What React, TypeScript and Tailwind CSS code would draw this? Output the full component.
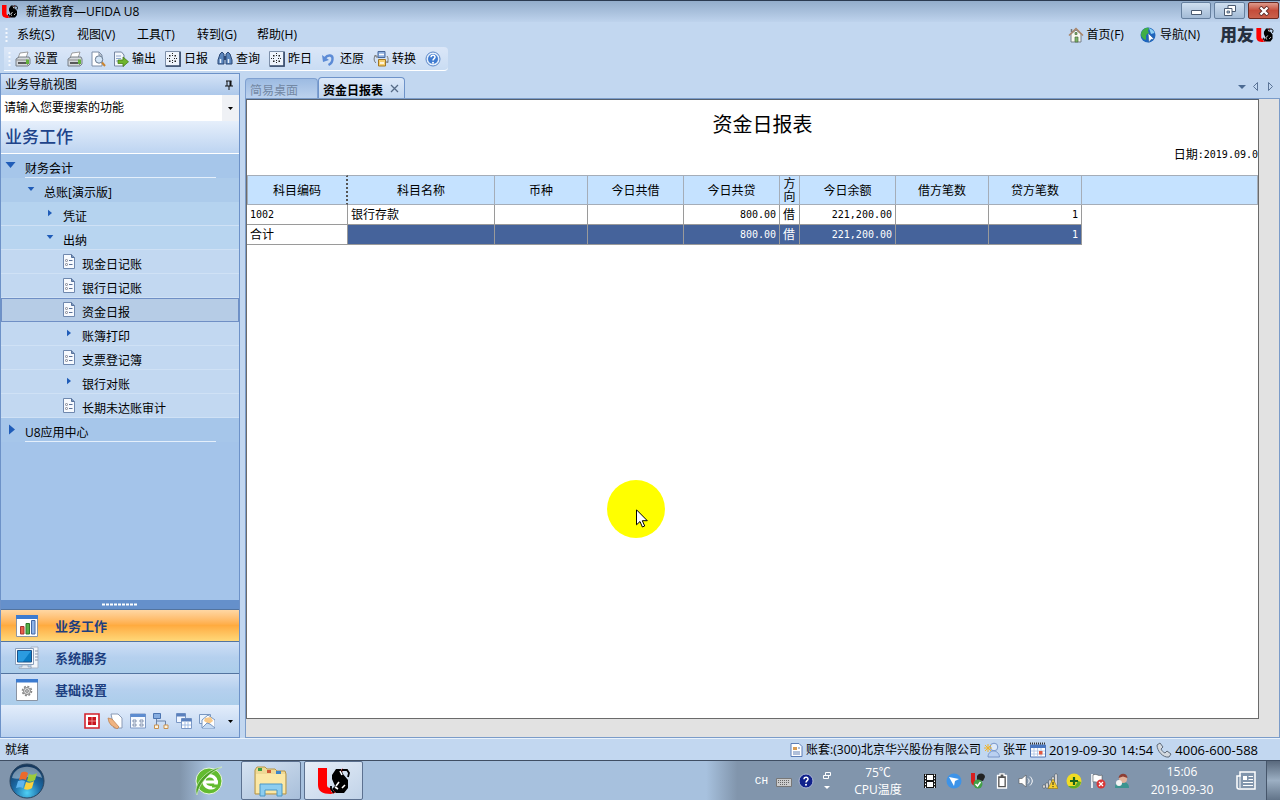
import React from 'react';

type IconProps = { className?: string };

const U8Logo: React.FC<IconProps> = ({ className }) => (
  <svg viewBox="0 0 32 26" className={className} aria-hidden="true">
    <path d="M0 0h9v17c0 2 1 3 4 3v6C4 26 0 23 0 17z" fill="#f00" />
    <path d="M13 25c6-1 8-5 9-10M20 8l5-7" fill="none" stroke="#e11" strokeWidth="2" />
    <path d="M14 7l4-6h5l2 5 5 6v8l-4 5h-8l-4-4 3-3-3-7z" fill="#000" />
    <path d="M24 2h5l2 3-1 4" fill="none" stroke="#000" strokeWidth="1.800" />
    <path d="M22 3l2 4M17 19l3 2M21 14l-3 4M24 20l3-3" stroke="#fff" strokeWidth="1.600" />
    <path d="M13 18v3l3 4" fill="none" stroke="#000" strokeWidth="1.800" />
  </svg>
);

const PrinterIcon = () => (
  <svg viewBox="0 0 16 16" className="size-4" aria-hidden="true">
    <path d="M5 2l8-1-2 6H3z" fill="#fff" stroke="#888" strokeWidth=".8" />
    <path d="M1 8l3-2h10l1 2v5l-2 2H1z" fill="#d4d8dc" stroke="#6b747e" strokeWidth=".9" />
    <path d="M1.500 9h11v5" fill="none" stroke="#888" />
    <path d="M3 12h8" stroke="#222" strokeWidth="1.4" />
    <path d="M11 8.500h3V13h-3z" fill="#63b23c" />
  </svg>
);

const PreviewIcon = () => (
  <svg viewBox="0 0 16 16" className="size-4" aria-hidden="true">
    <path d="M2 1h7l3 3v11H2z" fill="#fff" stroke="#7d8ea6" />
    <path d="M9 1v3h3" fill="none" stroke="#7d8ea6" />
    <circle cx="9" cy="8.500" r="3.700" fill="#d5e7f8" stroke="#66788e" />
    <path d="M12 11.500l3 3.500" stroke="#c98430" strokeWidth="2" />
  </svg>
);

const ExportIcon = () => (
  <svg viewBox="0 0 16 16" className="size-4" aria-hidden="true">
    <path d="M1.500 1h7l2.500 3v11H1.500z" fill="#f3f7fc" stroke="#7686a0" />
    <path d="M3 5h5M3 7.500h5M3 10h4" stroke="#8fa7cc" />
    <path d="M5 9h5V6l5.500 4.800L10 15.500v-3H5z" fill="#6fb52c" stroke="#477f18" strokeWidth=".8" />
  </svg>
);

const GridIcon = () => (
  <svg viewBox="0 0 16 16" className="size-4" aria-hidden="true">
    <path d="M.5.500h15v15H.5z" fill="#eef4fc" stroke="#7d8fa9" />
    <path d="M7.500 2v4M7.500 9v4M2 7.500h4M9 7.500h4" stroke="#222" strokeDasharray="1 1" />
    <path d="M4 4h1.500v1.500H4zM9.500 4H11v1.500H9.500zM4 9.500h1.500V11H4zM9.500 9.500H11V11H9.500z" fill="#222" />
    <path d="M15 1v14H1" fill="none" stroke="#35496a" strokeWidth="1.600" />
  </svg>
);

const BinocularsIcon = () => (
  <svg viewBox="0 0 16 16" className="size-4" aria-hidden="true">
    <path d="M3 3l2-2 2 2v10H1V9z" fill="#5b86bd" stroke="#2c4875" />
    <path d="M9 3l2-2 2 2 2 6v4H9z" fill="#5b86bd" stroke="#2c4875" />
    <path d="M7 5h2v4H7z" fill="#2c4875" />
    <path d="M3.500 8v4M11.500 8v4" stroke="#e6f0fb" strokeWidth="1.500" />
  </svg>
);

const UndoIcon = () => (
  <svg viewBox="0 0 16 16" className="size-4" aria-hidden="true">
    <path d="M4 7c3-4 8-3 7.500 1 0 3-2 5-4 6" fill="none" stroke="#5c8bd6" strokeWidth="2.400" />
    <path d="M1 4l1 7 6-2z" fill="#5c8bd6" />
  </svg>
);

const ConvertIcon = () => (
  <svg viewBox="0 0 16 16" className="size-4" aria-hidden="true">
    <path d="M5 .5h7v6H5z" fill="#8fb0e0" stroke="#49699c" />
    <path d="M6 3.500h5" stroke="#fff" strokeWidth="1.500" />
    <path d="M5.500 8.500h7V15h-7z" fill="#f6cf6d" stroke="#a17622" />
    <path d="M7 12h4" stroke="#fff" strokeWidth="1.500" />
    <path d="M3 4C.5 6 .5 10 3 12M14 5c1.500 2 1.500 5 0 7M1 5h3v2M15.500 11h-3" fill="none" stroke="#777" />
  </svg>
);

const HelpIcon = ({ dark = false }: { dark?: boolean }) => (
  <svg viewBox="0 0 16 16" className="size-4" aria-hidden="true">
    <circle cx="8" cy="8" r="7" fill={dark ? '#10218c' : '#e3eefb'} stroke={dark ? '#aeb9d4' : '#5d88c8'} />
    {!dark && <circle cx="8" cy="8" r="5" fill="#3f7bd0" />}
    <path d="M6 6.300c0-3 4.300-2.600 4 0-.2 1.300-2 1.500-2 3.200" fill="none" stroke="#fff" strokeWidth="1.500" />
    <circle cx="8" cy="11.700" r="1" fill="#fff" />
  </svg>
);

const HomeIcon = () => (
  <svg viewBox="0 0 16 16" className="size-4" aria-hidden="true">
    <path d="M3 7v8h10V7L8 3z" fill="#f8f8f0" stroke="#77808a" />
    <path d="M1 8.500L8 1.500l7 7" fill="none" stroke="#a98468" strokeWidth="1.500" />
    <path d="M3.500 2v3" stroke="#777" strokeWidth="1.500" />
    <path d="M7 5.500h2v2H7zM7 10h3v5H7z" fill="#7bb567" stroke="#4d6b44" strokeWidth=".7" />
  </svg>
);

const GlobeIcon = () => (
  <svg viewBox="0 0 16 16" className="size-4" aria-hidden="true">
    <circle cx="8" cy="8" r="7.500" fill="#1f66bd" />
    <path d="M2 4c2-3 5-4 7-3l-1 3 1 2-3 2v5C2 12-.5 8 2 4z" fill="#3fae46" />
    <path d="M9 1c3 1 5 3 5.500 5L11 7z" fill="#8ed0f4" />
    <path d="M8 6l6 6-3 .5-2 3z" fill="#fff" stroke="#2b5f9e" strokeWidth=".6" />
  </svg>
);

const DocIcon = () => (
  <svg viewBox="0 0 12 15" className="h-[15px] w-3" aria-hidden="true">
    <path d="M.5.500h8l3 3v11H.5z" fill="#f7fafe" stroke="#6f88ae" />
    <path d="M8.500.500v3h3" fill="#7d97bd" stroke="#56719b" />
    <path d="M2.500 6.500h2M2.500 10.500h2" stroke="#445" strokeWidth="2" />
    <path d="M3 6.500h1M3 10.500h1" stroke="#fff" />
    <path d="M6 6.500h3.500M6 10.500h3.500" stroke="#5c7299" />
  </svg>
);

const ArrowDown = ({ className }: IconProps) => (
  <svg viewBox="0 0 10 6" className={className} aria-hidden="true">
    <path d="M0 0h10L5 6z" fill="#1f5cb8" />
  </svg>
);

const ArrowRight = ({ className }: IconProps) => (
  <svg viewBox="0 0 6 10" className={className} aria-hidden="true">
    <path d="M0 0l6 5-6 5z" fill="#1f5cb8" />
  </svg>
);

const Caret = () => (
  <svg viewBox="0 0 5 3" className="h-[3px] w-[5px]" aria-hidden="true">
    <path d="M0 0h5L2.500 3z" fill="#000" />
  </svg>
);

const Grip = () => (
  <svg viewBox="0 0 3 14" className="h-3.5 w-[3px]" aria-hidden="true">
    <path d="M1.500 0v14" stroke="#f4f8fd" strokeWidth="2" strokeDasharray="2 2" />
  </svg>
);

const menus = ['系统(S)', '视图(V)', '工具(T)', '转到(G)', '帮助(H)'];

const tools: { icon: React.ReactNode; label?: string; name: string }[] = [
  { icon: <PrinterIcon />, label: '设置', name: '设置' },
  { icon: <PrinterIcon />, name: '打印' },
  { icon: <PreviewIcon />, name: '预览' },
  { icon: <ExportIcon />, label: '输出', name: '输出' },
  { icon: <GridIcon />, label: '日报', name: '日报' },
  { icon: <BinocularsIcon />, label: '查询', name: '查询' },
  { icon: <GridIcon />, label: '昨日', name: '昨日' },
  { icon: <UndoIcon />, label: '还原', name: '还原' },
  { icon: <ConvertIcon />, label: '转换', name: '转换' },
  { icon: <HelpIcon />, name: '帮助' }
];

interface TreeItem {
  label: string;
  level: 1 | 2 | 3 | 4;
  kind: 'open' | 'closed' | 'doc';
  bg: string;
  selected?: boolean;
}

const tree: TreeItem[] = [
  { label: '财务会计', level: 1, kind: 'open', bg: 'bg-[#a6c6ea]' },
  { label: '总账[演示版]', level: 2, kind: 'open', bg: 'bg-[#accbeb]' },
  { label: '凭证', level: 3, kind: 'closed', bg: 'bg-[#b5d3ef]' },
  { label: '出纳', level: 3, kind: 'open', bg: 'bg-[#b8d5f0]' },
  { label: '现金日记账', level: 4, kind: 'doc', bg: 'bg-[#c2d8f1]' },
  { label: '银行日记账', level: 4, kind: 'doc', bg: 'bg-[#c2d8f1]' },
  { label: '资金日报', level: 4, kind: 'doc', bg: 'bg-[#b6cce6]', selected: true },
  { label: '账簿打印', level: 4, kind: 'closed', bg: 'bg-[#c2d8f1]' },
  { label: '支票登记簿', level: 4, kind: 'doc', bg: 'bg-[#c2d8f1]' },
  { label: '银行对账', level: 4, kind: 'closed', bg: 'bg-[#c2d8f1]' },
  { label: '长期未达账审计', level: 4, kind: 'doc', bg: 'bg-[#c2d8f1]' },
  { label: 'U8应用中心', level: 1, kind: 'closed', bg: 'bg-[#a6c6ea]' }
];

const indent = { 1: 'pl-1', 2: 'pl-[23px]', 3: 'pl-[42px]', 4: 'pl-[61px]' };

const TreeRow: React.FC<{ item: TreeItem }> = ({ item }) => {
  const big = item.level === 1;
  return (
    <li>
      <button
        type="button"
        className={`flex h-6 w-full text-left ${indent[item.level]} ${item.bg} ${
          item.selected ? 'outline outline-1 -outline-offset-1 outline-[#6f8fc5]' : ''
        } ${item.level > 2 && !item.selected ? 'border-b border-[#cfe1f5]' : ''}`}
      >
        <span className="flex h-[22px] w-5 shrink-0 items-center">
          {item.kind === 'doc' && <span className="pl-px"><DocIcon /></span>}
          {item.kind === 'open' && <ArrowDown className={big ? 'h-1.5 w-[11px]' : 'ml-[3px] h-1 w-2'} />}
          {item.kind === 'closed' && <ArrowRight className={big ? 'ml-1 h-[11px] w-1.5' : 'ml-[5px] h-2 w-1'} />}
        </span>
        <span className={`h-6 pt-1.5 leading-[18px] ${big ? 'mr-[23px] flex-1 border-b border-[#e4effb]' : ''}`}>
          {item.label}
        </span>
      </button>
    </li>
  );
};

const ChartIcon = () => (
  <svg viewBox="0 0 24 24" className="size-6" aria-hidden="true">
    <path d="M1.500 1.500h21v21h-21z" fill="#fff" stroke="#8a94a3" />
    <path d="M1 1h22v4H1z" fill="#3c7bd0" />
    <path d="M5.500 12.500h3.500V20H5.500z" fill="#e8604a" stroke="#a33" />
    <path d="M11 9.500h3.500V20H11z" fill="#55b04a" stroke="#2d7828" />
    <path d="M16.500 6.500H20V20h-3.500z" fill="#8fb4e8" stroke="#4468a5" />
  </svg>
);

const ComputerIcon = () => (
  <svg viewBox="0 0 24 24" className="size-6" aria-hidden="true">
    <path d="M16 1h7v21h-7z" fill="#f1f5fa" stroke="#a7b4c7" />
    <path d="M20 5h3M20 8h3M20 11h3M20 14h3" stroke="#8795ab" />
    <path d="M.5 2.500h18v16H.5z" fill="#f7fafd" stroke="#8ba0bc" />
    <path d="M2.500 4.500h14v11.500h-14z" fill="#0a7cc4" stroke="#1c4f86" />
    <path d="M3 5h13L8 15.500H3z" fill="#2b9be0" />
    <path d="M7 19h6v2h3v1.500H4V21h3z" fill="#dfe7f0" stroke="#93a3b8" strokeWidth=".7" />
  </svg>
);

const GearIcon = () => (
  <svg viewBox="0 0 24 24" className="size-6" aria-hidden="true">
    <path d="M1.500 1.500h21v21h-21z" fill="#fff" stroke="#8a94a3" />
    <path d="M1 1h22v3.500H1z" fill="#3c7bd0" />
    <circle cx="12" cy="13" r="4.500" fill="none" stroke="#888" strokeWidth="1.600" strokeDasharray="2 1.500" />
    <circle cx="12" cy="13" r="3.500" fill="#ddd" stroke="#888" />
    <circle cx="12" cy="13" r="1.300" fill="#fff" stroke="#777" />
  </svg>
);

const navGroups = [
  { label: '业务工作', icon: <ChartIcon />, bg: 'from-[#ffd7a3] via-[#ffab3f] to-[#ffd878]' },
  { label: '系统服务', icon: <ComputerIcon />, bg: 'from-[#cfdff5] via-[#b5d0ee] to-[#abcdea]' },
  { label: '基础设置', icon: <GearIcon />, bg: 'from-[#cfdff5] via-[#b5d0ee] to-[#abcdea]' }
];

const shortcuts = [
  {
    name: '启用',
    art: (
      <>
        <path d="M1 1h14v14H1z" fill="#fff" stroke="#d2222d" strokeWidth="1.600" />
        <path d="M4 4h8v8H4z" fill="#c9141f" />
        <path d="M8 4v8M4 8h8" stroke="#f2a6a6" strokeWidth=".8" />
      </>
    )
  },
  {
    name: '单据',
    art: (
      <>
        <path d="M4 1h7l4 4v10H7z" fill="#fff" stroke="#8a9ab5" />
        <path d="M1 5l4 1 7 8-2 2-6-4-2-3z" fill="#f0b482" stroke="#b97a48" strokeWidth=".7" />
      </>
    )
  },
  {
    name: '参数',
    art: (
      <>
        <path d="M.5 1h15v14H.5z" fill="#f6faff" stroke="#7e99c4" />
        <path d="M.5 1h15v3H.5z" fill="#5c8cd0" />
        <path d="M3 7h3v2H3zM3 11h3v2H3zM10 7h3v2h-3zM10 11h3v2h-3z" fill="none" stroke="#6c7f9e" strokeWidth=".8" />
      </>
    )
  },
  {
    name: '流程',
    art: (
      <>
        <path d="M3.500 5v9M3.500 8h9v4" fill="none" stroke="#6d84a8" />
        <path d="M.5.500h7v5h-7z" fill="#86ade0" stroke="#4c74b0" />
        <path d="M1.500 12h4v3.500h-4zM11 12h4v3.500h-4z" fill="#fff3dc" stroke="#c79252" />
      </>
    )
  },
  {
    name: '窗口',
    art: (
      <>
        <path d="M.5.500h9v9h-9z" fill="#f0f6ff" stroke="#7b98c6" />
        <path d="M.5.500h9v3h-9z" fill="#5a80bd" />
        <path d="M5.500 5.500h10v10h-10z" fill="#fff" stroke="#7b98c6" />
        <path d="M5.500 5.500h10v3h-10z" fill="#5a80bd" />
        <path d="M9 9v6M12 9v6M6 12h9" stroke="#8fb0e0" strokeWidth=".8" />
      </>
    )
  },
  {
    name: '消息',
    art: (
      <>
        <path d="M.5 1.500h11v9H.5z" fill="#eaf3fd" stroke="#7896c0" />
        <path d="M3 7l6-5 7 5v8H3z" fill="#fff" stroke="#7896c0" />
        <path d="M6 5l6-1 2 4-4 3-5-3z" fill="#f7c98a" />
        <path d="M3 15l5-5 3 1 5 4" fill="#c4daf3" stroke="#7896c0" />
      </>
    )
  }
];

const Sidebar = () => (
  <aside className="flex w-60 shrink-0 flex-col border-x border-[#6d92c8] bg-[#a4c4ea]">
    <div className="flex h-[22px] shrink-0 items-center justify-between border-t border-[#6d92c8] bg-linear-to-b from-[#d4e3f7] to-[#adc8ea] pr-1.5 pl-1">
      <h2>业务导航视图</h2>
      <svg viewBox="0 0 8 10" className="h-2.5 w-2" aria-hidden="true">
        <path d="M1 1h5.500M2 1v5M0 6h8M4 6v4" fill="none" stroke="#111" />
        <path d="M5.500 1v5" stroke="#111" strokeWidth="2" />
      </svg>
    </div>
    <div className="flex h-[26px] shrink-0 bg-white">
      <input
        type="text"
        aria-label="搜索功能"
        placeholder="请输入您要搜索的功能"
        className="min-w-0 flex-1 pl-[3px] outline-none placeholder:text-black"
      />
      <button type="button" aria-label="展开" className="flex w-[17px] items-center justify-center bg-[#eff1f5]">
        <Caret />
      </button>
    </div>
    <h3 className="flex h-[33px] shrink-0 items-center border-b border-white bg-linear-to-b from-[#e6effb] to-[#bdd4f1] pb-px pl-1 text-[17px] font-medium text-[#20438a]">
      业务工作
    </h3>
    <ul className="min-h-0 flex-1">
      {tree.map((item) => (
        <TreeRow key={item.label} item={item} />
      ))}
    </ul>
    <div className="flex h-[9px] shrink-0 items-center justify-center bg-[#6590cb]">
      <svg viewBox="0 0 36 3" className="h-[3px] w-9" aria-hidden="true">
        <path d="M0 1.500h36" stroke="#fff" strokeWidth="2" strokeDasharray="3 1" />
      </svg>
    </div>
    {navGroups.map((group) => (
      <button
        key={group.label}
        type="button"
        className={`flex h-8 shrink-0 items-center gap-4 border-t border-[#53749f] bg-linear-to-b pl-3.5 text-[13px] font-bold text-[#1d3f80] ${group.bg}`}
      >
        {group.icon}
        {group.label}
      </button>
    ))}
    <div className="flex h-[33px] shrink-0 items-center justify-end gap-[7px] border-b border-[#6d92c8] bg-linear-to-b from-[#e3edfb] to-[#b9d1ef] pr-1.5">
      {shortcuts.map((shortcut) => (
        <button key={shortcut.name} type="button" aria-label={shortcut.name}>
          <svg viewBox="0 0 16 16" className="size-4" aria-hidden="true">
            {shortcut.art}
          </svg>
        </button>
      ))}
      <button type="button" aria-label="更多" className="ml-1.5">
        <Caret />
      </button>
    </div>
  </aside>
);

const columns = [
  { title: '科目编码', width: 'w-[101px]' },
  { title: '科目名称', width: 'w-[147px]' },
  { title: '币种', width: 'w-[93px]' },
  { title: '今日共借', width: 'w-24' },
  { title: '今日共贷', width: 'w-24' },
  { title: '方向', width: 'w-5' },
  { title: '今日余额', width: 'w-24' },
  { title: '借方笔数', width: 'w-[93px]' },
  { title: '贷方笔数', width: 'w-[93px]' }
];

const rows = [
  { code: '1002', name: '银行存款', credit: '800.00', side: '借', balance: '221,200.00', count: '1', total: false },
  { code: '合计', name: '', credit: '800.00', side: '借', balance: '221,200.00', count: '1', total: true }
];

const cell = 'h-5 overflow-hidden border-r border-b border-[#9a9a9a] p-0 px-[3px] whitespace-nowrap';
const mono = "font-['DejaVu_Sans_Mono',monospace] text-[10px]";
const numeric = `text-right ${mono}`;

const ReportTable = () => (
  <table className="w-full table-fixed border-separate border-spacing-0 leading-[13px]">
    <colgroup>
      {columns.map((column) => (
        <col key={column.title} className={column.width} />
      ))}
      <col />
    </colgroup>
    <thead>
      <tr className="bg-[#c5e2ff]">
        {columns.map((column, index) => (
          <th
            key={column.title}
            className={`h-[30px] border-y border-r border-[#a5adb8] p-0 font-normal ${
              index === 0 ? 'border-l border-r-2 border-r-[#555] [border-right-style:dotted]' : ''
            } ${column.title === '方向' ? 'px-[3px]' : ''}`}
          >
            {column.title}
          </th>
        ))}
        <th className="border-y border-r border-[#a5adb8] p-0" />
      </tr>
    </thead>
    <tbody>
      {rows.map((row) => {
        const fill = row.total ? 'bg-[#45639b]' : '';
        return (
          <tr key={row.code} className={row.total ? 'text-white' : ''}>
            <td className={`${cell} text-black ${row.total ? '' : mono}`}>{row.code}</td>
            <td className={`${cell} ${fill}`}>{row.name}</td>
            <td className={`${cell} ${fill}`} />
            <td className={`${cell} ${fill}`} />
            <td className={`${cell} ${numeric} ${fill}`}>{row.credit}</td>
            <td className={`${cell} ${fill}`}>{row.side}</td>
            <td className={`${cell} ${numeric} ${fill}`}>{row.balance}</td>
            <td className={`${cell} ${fill}`} />
            <td className={`${cell} ${numeric} ${fill}`}>{row.count}</td>
            <td className="p-0" />
          </tr>
        );
      })}
    </tbody>
  </table>
);

const Workspace = () => (
  <main className="ml-[5px] flex min-w-0 flex-1 flex-col">
    <div className="flex h-[25px] shrink-0 items-end justify-between pr-1.5">
      <div className="flex items-end">
        <button
          type="button"
          className="h-5 w-[73px] rounded-t-sm border border-b-0 border-[#7fa0d0] bg-linear-to-b from-[#9dbbe2] to-[#bcd2ee] pt-1 pl-1 text-left leading-4 text-[#7388a4]"
        >
          简易桌面
        </button>
        <div className="flex h-[21px] w-[87px] rounded-t-sm border border-b-0 border-[#6e93c9] bg-linear-to-b from-[#dce8f8] to-[#c2d7f0] pt-[5px] pl-1 leading-4">
          <button type="button" className="font-bold">
            资金日报表
          </button>
          <button type="button" aria-label="关闭" className="ml-[7px] h-2.5">
            <svg viewBox="0 0 9 9" className="size-[9px]" aria-hidden="true">
              <path d="M1 1l7 7M8 1L1 8" stroke="#566a86" strokeWidth="1.300" />
            </svg>
          </button>
        </div>
      </div>
      <svg viewBox="0 0 36 9" className="mb-[7px] h-[9px] w-9" aria-hidden="true">
        <path d="M0 3h8L4 7z" fill="#4b6a92" />
        <path d="M19.500 .5v8L15.500 4.500zM30.500 .5v8l4-4z" fill="none" stroke="#5b7497" />
      </svg>
    </div>
    <div className="flex min-h-0 flex-1 flex-col border border-[#7b9cc9] bg-[#e2e2e2] pr-5 pb-[18px]">
      <div className="relative min-h-0 flex-1 border border-[#6b6b6b] border-t-[#55606e] bg-white">
        <h1 className="h-12 pt-[11px] pl-5 text-center text-[20px] leading-7">资金日报表</h1>
        <p className="flex h-[27px] items-start justify-end pt-px leading-3">
          <span>日期</span>
          <span className={mono}>:2019.09.0</span>
        </p>
        <ReportTable />
        {/* click highlight and pointer float over the report */}
        <div className="absolute top-[380px] left-[360px] size-[58px] rounded-full bg-[#ff0]">
          <svg viewBox="0 0 12 19" className="absolute top-[29px] left-[29px] h-[19px] w-3" aria-hidden="true">
            <path d="M.5.800v15l3.500-3.300 2.400 5.500 2.300-1-2.400-5.300h5z" fill="#fff" stroke="#000" />
          </svg>
        </div>
      </div>
    </div>
  </main>
);

const StatusBar = () => (
  <footer className="flex h-[22px] shrink-0 items-center justify-between border-t border-[#e9f2fc] bg-[#c2d7f0] pr-[22px] pl-[5px]">
    <span>就绪</span>
    <div className="flex items-center gap-[3px]">
      <svg viewBox="0 0 13 14" className="h-3.5 w-[13px]" aria-hidden="true">
        <path d="M1 .5h8l3 3v10H1z" fill="#fff" stroke="#5b7db5" />
        <path d="M3 4h4v3H3z" fill="#d79b52" />
        <path d="M8 5h2M3 9h7M3 11h7" stroke="#6080b5" />
      </svg>
      <span>账套:(300)北京华兴股份有限公司</span>
      <svg viewBox="0 0 16 16" className="size-4" aria-hidden="true">
        <circle cx="10" cy="5" r="3.800" fill="#dce9f9" stroke="#7896c8" />
        <path d="M4 15c0-8 11-8 11.500 0z" fill="#b9d0f0" stroke="#7896c8" />
        <path d="M4 2v8M0 6h8M1 3l6 6M7 3L1 9" stroke="#f0b429" />
      </svg>
      <span>张平</span>
      <svg viewBox="0 0 16 16" className="size-4" aria-hidden="true">
        <path d="M.5 3h15v12H.5z" fill="#fff" stroke="#5277b5" />
        <path d="M.5 3h15v3H.5z" fill="#4a78c2" />
        <path d="M0 1.500h16" stroke="#333" strokeWidth="2" strokeDasharray="1 1" />
        <path d="M4 6v9M7.500 6v9M11 6v9M1 9h14M1 12h14" stroke="#aac0e2" strokeWidth=".8" />
        <path d="M9 9h3.500v3.500H9z" fill="#e05a42" />
      </svg>
      <span className="text-[13px]">2019-09-30 14:54</span>
      <svg viewBox="0 0 16 16" className="size-4" aria-hidden="true">
        <path d="M1 3l3-2 3 4-2 2c1 2 2 3 4 4l2-2 4 3-2 3C7 16 1 9 1 3z" fill="#d3d9e0" stroke="#5f6b7a" />
      </svg>
      <span className="text-[13px]">4006-600-588</span>
    </div>
  </footer>
);

const trayIcons = [
  {
    name: '视频',
    art: (
      <>
        <path d="M2 1h12v14H2z" fill="#111" />
        <path d="M5 2h6v5H5zM5 9h6v5H5z" fill="#fff" />
        <path d="M3.500 1.500v14M12.500 1.500v14" stroke="#fff" strokeDasharray="1.500 1.500" />
      </>
    )
  },
  {
    name: '飞鸽',
    art: (
      <>
        <circle cx="8" cy="8" r="7.500" fill="#3d93e8" />
        <path d="M3 4l10 2-4 2-1 5z" fill="#fff" />
      </>
    )
  },
  {
    name: 'U8',
    art: (
      <>
        <path d="M1 0h4v8l3 2v3c-5 0-7-2-7-5z" fill="#d81e1e" />
        <path d="M7 3c2-4 8-3 8 1l-2 4-6-1z" fill="#222" />
        <circle cx="8" cy="11" r="4.500" fill="#43a047" />
        <path d="M5.500 11l2 2 3-4" fill="none" stroke="#fff" strokeWidth="1.500" />
      </>
    )
  },
  {
    name: '电池',
    art: (
      <>
        <path d="M3.500 2.500h2.500V.8h4v1.700h2.500V15h-9z" fill="#555" stroke="#fff" strokeWidth="1.300" />
        <path d="M5.500 5h5v8h-5z" fill="#fff" />
      </>
    )
  },
  {
    name: '音量',
    art: (
      <>
        <path d="M1 5.500h3L8 2v12l-4-3.500H1z" fill="#fff" stroke="#555" strokeWidth=".6" />
        <path d="M10 5.500c1.500 1.500 1.500 3.500 0 5M12 3.500c3 3 3 6 0 9" fill="none" stroke="#fff" />
      </>
    )
  },
  {
    name: '网络',
    art: (
      <>
        <path d="M1 12h2v3H1zM4 10h2v5H4zM7 7h2v8H7zM10 4h2v11h-2zM13 1h2v14h-2z" fill="#fff" stroke="#444" strokeWidth=".5" />
        <path d="M11 6l5 9.500H6z" fill="#f6cf2d" stroke="#9a7a10" strokeWidth=".6" />
        <path d="M11 9v3M11 13v1.200" stroke="#222" />
      </>
    )
  },
  {
    name: '安全',
    art: (
      <>
        <circle cx="8" cy="8" r="7.500" fill="#f1dc23" />
        <path d="M2 13A7.500 7.500 0 0 0 15 9l-3-1-3 5z" fill="#5dab2b" />
        <path d="M8 4v8M4 8h8" stroke="#18641c" strokeWidth="2.200" />
      </>
    )
  },
  {
    name: '操作中心',
    art: (
      <>
        <path d="M2 1v14" stroke="#fff" strokeWidth="1.600" />
        <path d="M3 2c4-2 5 2 9 0v7c-4 2-5-1-9 0z" fill="#fff" stroke="#444" strokeWidth=".5" />
        <circle cx="11" cy="11" r="4.500" fill="#d93636" />
        <path d="M9 9l4 4M13 9l-4 4" stroke="#fff" strokeWidth="1.300" />
      </>
    )
  },
  {
    name: '用户',
    art: (
      <>
        <path d="M1 15c0-6 3-6 7-6s7 1 7 6z" fill="#3c9490" />
        <circle cx="9" cy="6" r="4" fill="#e2b199" />
        <path d="M4.500 5c1-6 9-5 9 0L9 3.500z" fill="#8c3f35" />
        <circle cx="5" cy="10" r="3" fill="#f3f3f3" />
      </>
    )
  }
];

const Taskbar = () => (
  <div className="flex h-10 shrink-0 items-stretch border-t border-[#3f4e63] bg-[#8195ac] text-white">
    <button type="button" aria-label="开始" className="flex w-[54px] items-center justify-center">
      <svg viewBox="0 0 36 36" className="size-9" aria-hidden="true">
        <defs>
          <radialGradient id="orb" cx="50%" cy="85%" r="80%">
            <stop offset="0" stopColor="#4fd0f5" />
            <stop offset=".5" stopColor="#1b6aa5" />
            <stop offset="1" stopColor="#16385e" />
          </radialGradient>
        </defs>
        <circle cx="18" cy="18" r="17" fill="url(#orb)" stroke="#29445f" />
        <path d="M3 15c3-15 27-15 30 0-9-5-20 3-30 0z" fill="#fff" opacity=".4" />
        <path d="M12 10c3-2 5-1 7 0l-2 7c-2-1-4-1-7 0z" fill="#ec6a2c" />
        <path d="M20 11c3 1 5 1 8-1l-2 7c-3 2-5 2-8 1z" fill="#9ccb3c" />
        <path d="M9 18c3-1 5-1 7 0l-2 7c-2-1-4-1-7 0z" fill="#5fb4ee" />
        <path d="M17 19c3 1 5 1 8-1l-2 7c-3 2-5 2-8 1z" fill="#fbd13c" />
      </svg>
    </button>
    <div className="ml-[126px] flex flex-1 bg-linear-to-r from-[#8195ac] via-[#a7c1de] via-5% to-[#a7c1de]">
      <button type="button" aria-label="浏览器" className="mr-1 flex w-[57px] items-center justify-center">
        <svg viewBox="0 0 30 30" className="size-[30px]" aria-hidden="true">
          <circle cx="15" cy="15" r="13" fill="#62bb2f" stroke="#e8f5df" />
          <path d="M22 19c-3 5-12 3-12-4 0-7 11-7 12 0z" fill="none" stroke="#fff" strokeWidth="3.400" />
          <path d="M9 16h15" stroke="#fff" strokeWidth="3" />
          <path d="M18 20h8" stroke="#62bb2f" strokeWidth="3" />
          <path d="M3 29C-2 20 12 3 28 1 14 7 5 18 3 29z" fill="#4ea324" stroke="#d5efc5" strokeWidth=".7" />
        </svg>
      </button>
      <button
        type="button"
        aria-label="资源管理器"
        className="flex w-[60px] items-center justify-center rounded-xs border border-[#5c7190] bg-linear-to-br from-[#d5e2f1] to-[#a8bfda]"
      >
        <svg viewBox="0 0 34 32" className="h-8 w-[34px]" aria-hidden="true">
          <path d="M1 5l2-3h8l2 2h8l2 2h8l1 3v20H1z" fill="#efd995" stroke="#b79545" />
          <path d="M4 3h4v3H4z" fill="#3f9d41" />
          <path d="M13 5h4v3h-4z" fill="#d05b35" />
          <path d="M22 6h5v3h-5z" fill="#3f86c8" />
          <path d="M2 9h29v19H2z" fill="#fbe8a6" />
          <path d="M6 31V19h22v12h-5v-6H11v6z" fill="#8ccdf0" stroke="#4a97c6" />
        </svg>
      </button>
      <button
        type="button"
        aria-label="UFIDA U8"
        className="ml-[3px] flex w-[59px] items-center justify-center rounded-xs border border-[#5c7190] bg-linear-to-br from-[#e6eef8] to-[#c1d3e8]"
      >
        <U8Logo className="h-[26px] w-8" />
      </button>
      <div className="flex-1 bg-linear-to-r from-[#a7c1de] from-88% to-[#8195ac] to-96%" />
    </div>
    <div className="flex items-center">
      <span className="ml-0.5 font-['Liberation_Mono',monospace] text-[11px]">CH</span>
      <button type="button" aria-label="输入法" className="ml-2">
        <svg viewBox="0 0 16 12" className="h-3 w-4" aria-hidden="true">
          <path d="M.5 3.500h15v8H.5z" fill="#ccc" stroke="#777" />
          <path d="M2 5.500h12M2 7.500h12M4 9.500h8" stroke="#666" strokeDasharray="1 1" />
        </svg>
      </button>
      <button type="button" aria-label="帮助" className="ml-1.5">
        <HelpIcon dark />
      </button>
      <svg viewBox="0 0 10 20" className="mr-1 ml-2 h-5 w-2.5" aria-hidden="true">
        <path d="M3.500 1.500h5v3h-5zM1.500 4.500h5v3h-5z" fill="#8195ac" stroke="#fff" />
        <path d="M2 15h6l-3 3z" fill="#fff" />
      </svg>
      <div className="w-[84px] text-center leading-[17px]">
        <p>75℃</p>
        <p>CPU温度</p>
      </div>
      <div className="mx-0.5 flex gap-2">
        {trayIcons.map((icon) => (
          <button key={icon.name} type="button" aria-label={icon.name}>
            <svg viewBox="0 0 16 16" className="size-4" aria-hidden="true">
              {icon.art}
            </svg>
          </button>
        ))}
      </div>
      <div className="w-[100px] text-center leading-[18px]">
        <p>15:06</p>
        <p>2019-09-30</p>
      </div>
      <svg viewBox="0 0 20 19" className="mx-1 h-[19px] w-5" aria-hidden="true">
        <path d="M4 1h15v17H3c-2 0-2-1-2-2V5h3z" fill="none" stroke="#fff" strokeWidth="1.500" />
        <path d="M4 4v13" stroke="#fff" />
        <path d="M7 5h4v4H7z" fill="#fff" />
        <path d="M12.500 5.500H17M12.500 8.500H17M7 11.500h10M7 14.500h10" stroke="#fff" />
      </svg>
    </div>
    <button type="button" aria-label="显示桌面" className="ml-1.5 w-3.5 border-l border-[#46566b] bg-linear-to-b from-[#59697d] via-[#9cafc3] to-[#627489]" />
  </div>
);

export default function App() {
  return (
    <div className="flex h-screen flex-col overflow-hidden bg-[#c2d7f0] font-['Open_Sans','Noto_Sans_CJK_SC',sans-serif] text-[12px] leading-4 text-black">
      <header className="flex h-[22px] shrink-0 items-center justify-between border-t border-[#2b3a50] bg-linear-to-b from-[#93adcb] to-[#bed3ed] pl-0.5">
        <div className="flex items-center gap-2">
          <U8Logo className="h-[13px] w-4" />
          <span>新道教育—UFIDA U8</span>
        </div>
        <div className="flex gap-[3px] pr-px pb-0.5">
          <button type="button" aria-label="最小化" className="flex h-[17px] w-[30px] items-center justify-center rounded-xs border border-[#66809f] bg-linear-to-b from-[#cfdff0] to-[#a3bbd6]">
            <svg viewBox="0 0 11 5" className="mt-1 h-[5px] w-[11px]" aria-hidden="true">
              <path d="M.5.500h10v4H.5z" fill="#fff" stroke="#4a5a70" />
            </svg>
          </button>
          <button type="button" aria-label="还原窗口" className="flex h-[17px] w-[31px] items-center justify-center rounded-xs border border-[#66809f] bg-linear-to-b from-[#cfdff0] to-[#a3bbd6]">
            <svg viewBox="0 0 12 11" className="h-[11px] w-3" aria-hidden="true">
              <path d="M4 .5h7.500v6H4z" fill="#fff" stroke="#4a5a70" />
              <path d="M.5 3.500H8v7H.5z" fill="#fff" stroke="#4a5a70" />
              <path d="M3 6h2.500v2H3z" fill="#a3bbd6" stroke="#4a5a70" strokeWidth=".8" />
            </svg>
          </button>
          <button type="button" aria-label="关闭窗口" className="flex h-[17px] w-[31px] items-center justify-center rounded-xs border border-[#6c2a22] bg-linear-to-b from-[#dd9a8c] via-[#c44c3a] to-[#c9604c]">
            <svg viewBox="0 0 12 10" className="h-2.5 w-3" aria-hidden="true">
              <path d="M2 1l8 8M10 1L2 9" stroke="#5b2a28" strokeWidth="4" />
              <path d="M2.500 1.500l7 7M9.500 1.500l-7 7" stroke="#fff" strokeWidth="2.400" />
            </svg>
          </button>
        </div>
      </header>

      <nav className="flex h-[25px] shrink-0 items-center justify-between pr-1.5 pl-[5px]">
        <div className="flex items-center">
          <Grip />
          {menus.map((menu) => (
            <button key={menu} type="button" className="w-[60px] pl-[9px] text-left">
              {menu}
            </button>
          ))}
        </div>
        <div className="flex items-center">
          <button type="button" className="flex items-center gap-[3px]">
            <HomeIcon />
            首页(F)
          </button>
          <button type="button" className="ml-4 flex items-center gap-1">
            <GlobeIcon />
            导航(N)
          </button>
          <div className="ml-5 flex items-center gap-0.5">
            <span className="text-[17px] leading-5 font-black text-[#26303f]">用友</span>
            <U8Logo className="h-3.5 w-[18px]" />
          </div>
        </div>
      </nav>

      <div className="flex h-6 shrink-0">
        <div className="ml-1 flex items-center rounded-r-sm border-b border-white bg-linear-to-b from-[#dbe7f8] to-[#c9dcf3] pr-1 pl-1">
          <Grip />
          {tools.map((tool) => (
            <button
              key={tool.name}
              type="button"
              aria-label={tool.name}
              className={`flex items-center gap-[3px] pl-1 ${tool.label ? 'pr-[5px]' : 'pr-[3px]'}`}
            >
              {tool.icon}
              {tool.label}
            </button>
          ))}
        </div>
      </div>

      <div className="mt-0.5 flex min-h-0 flex-1">
        <Sidebar />
        <Workspace />
      </div>
      <StatusBar />
      <Taskbar />
    </div>
  );
}
